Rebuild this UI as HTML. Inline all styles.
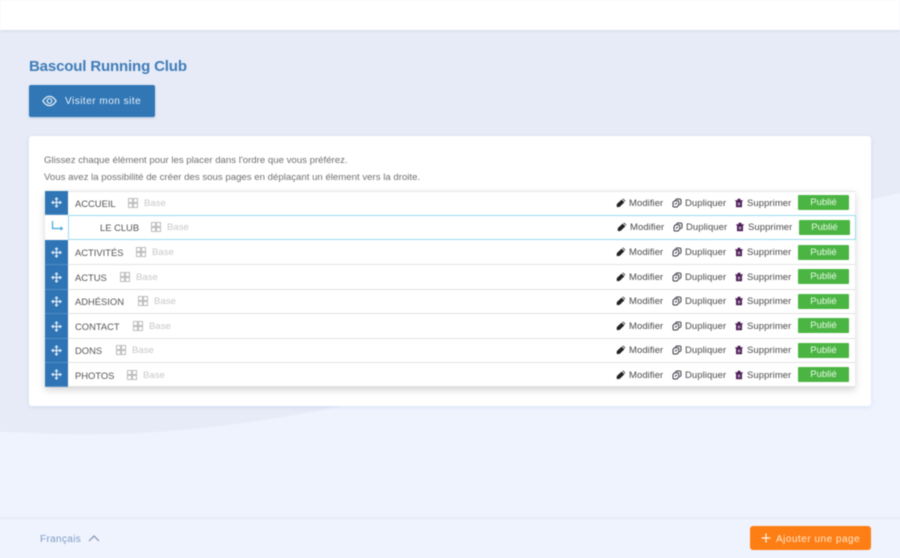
<!DOCTYPE html>
<html lang="fr"><head><meta charset="utf-8"><title>Bascoul Running Club</title>
<style>
html,body{margin:0;padding:0}
body{width:900px;height:558px;overflow:hidden;position:relative;background:#eff3fe;font-family:"Liberation Sans",sans-serif;color:#555}
.a{position:absolute}
#wrap{position:absolute;left:0;top:0;width:900px;height:558px;filter:blur(.45px)}
.top{left:0;top:0;width:900px;height:30px;background:#fff;box-shadow:0 1px 3px rgba(120,140,180,.18)}
.title{left:29px;top:57px;font-size:15px;line-height:20px;font-weight:bold;color:#3f7cb8;white-space:nowrap;letter-spacing:-.15px}
.visit{left:29px;top:85px;width:126px;height:32px;background:#3177b6;border-radius:2px;color:#e6eff8;box-shadow:0 1px 2px rgba(50,90,140,.25)}
.visit span{position:absolute;left:36px;top:10px;font-size:10px;line-height:14px;letter-spacing:.5px;white-space:nowrap}
.card{left:29px;top:136px;width:842px;height:270px;background:#fff;border-radius:3px;box-shadow:0 1px 5px rgba(130,160,215,.2)}
.p{left:44px;font-size:9.65px;line-height:13px;color:#707070;white-space:nowrap}
.list{left:45px;top:191px;width:810px;height:196px;box-shadow:0 3px 7px rgba(60,60,60,.22)}
.row{position:absolute;background:#fff;border-bottom:1px solid #e2e2e2;box-sizing:border-box;left:68px;width:787px}
.row.first{border-top:1px solid #e6e6e6}
.h{position:absolute;left:45px;width:23px;background:#2f75b5;border-bottom:1px solid #4f8cc4;box-sizing:border-box}
.h svg{position:absolute;left:6px;top:50%;margin-top:-5.5px}
.child{left:68px;width:788px;border:1px solid #9adcee;background:#fff;box-sizing:border-box;position:absolute;top:215px;height:25px}
.t{position:absolute;font-size:9.4px;line-height:12px;margin-top:1px;color:#555;white-space:nowrap}
.b{position:absolute;font-size:9.6px;line-height:12px;margin-top:1px;color:#c8c8c8;white-space:nowrap}
.q{position:absolute;width:10px;height:10px}
.act{position:absolute;font-size:9.5px;line-height:12px;margin-top:1px;letter-spacing:.06px;color:#4a4a4a;white-space:nowrap}
.ic{position:absolute;width:10px;height:10px}
.pub{position:absolute;width:51px;height:15px;background:#4bb543;color:#eaf7e8;font-size:9.5px;line-height:16px;text-align:center;border-radius:1px}
.fline{left:0;top:518px;width:900px;height:1px;background:#e4e8f3;box-shadow:0 -1px 2px rgba(140,150,180,.1)}
.lang{left:40px;top:533px;font-size:10px;line-height:13px;color:#7c9cc4;letter-spacing:.35px}
.add{left:750px;top:526px;width:121px;height:24px;background:#fd7e14;border-radius:3px;color:#fde8d4}
.add span{position:absolute;left:26px;top:7px;font-size:10px;line-height:13px;letter-spacing:.5px;white-space:nowrap}
</style></head><body><div id="wrap">
<svg class="a" style="left:0;top:0" width="900" height="558"><path d="M0 30H900V193C760 220 600 340 430 385C300 420 170 437 60 434C35 433 15 432 0 432Z" fill="#e6ebf7"/></svg>
<div class="a top"></div>
<div class="a title">Bascoul Running Club</div>
<div class="a visit">
<svg class="a" style="left:13px;top:9px" width="15" height="14" viewBox="0 0 15 14" fill="none" stroke="#e6eff8" stroke-width="1.2"><path d="M.9 7C3 3.6 5.2 2.4 7.5 2.4S12 3.6 14.1 7C12 10.4 9.800 11.600 7.500 11.600S3 10.400 .9 7Z"/><circle cx="7.500" cy="7" r="2.300"/></svg>
<span>Visiter mon site</span></div>
<div class="a card"></div>
<div class="a p" style="top:154px">Glissez chaque élément pour les placer dans l'ordre que vous préférez.</div>
<div class="a p" style="top:171px">Vous avez la possibilité de créer des sous pages en déplaçant un élement vers la droite.</div>
<div class="a list"></div>

<svg width="0" height="0" style="position:absolute"><defs>
<g id="mv" fill="none" stroke="#e3eef8" stroke-width="1.200"><path d="M5.500 1V10M1 5.500H10"/><path d="M4 2.400L5.500 .8L7 2.400M4 8.600L5.500 10.200L7 8.600M2.400 4L.8 5.500L2.400 7M8.600 4L10.200 5.500L8.600 7" stroke-width="1"/></g>
<g id="qr" fill="none" stroke="#bdbdbd" stroke-width="1"><rect x=".5" y=".5" width="4" height="4"/><rect x="5.500" y=".5" width="4" height="4"/><rect x=".5" y="5.500" width="4" height="4"/><rect x="5.500" y="5.500" width="4" height="4"/></g>
<g id="ed"><path d="M.6 8.200L.9 6L5.600 1.600L8.400 4.300L3.800 8.800L1.400 9.200Z" fill="#222"/><path d="M6.300 1L7.200.5L9.400 2.700L9 3.600Z" fill="#444"/></g>
<g id="du" fill="none" stroke="#3a3a46" stroke-width="1"><path d="M3.300 2.600L4.500 1H7.500C8.500 1 9 1.500 9 2.500V5.500L7.800 7"/><path d="M1 4.500L2.500 2.800H5.500C6.200 2.800 6.800 3.400 6.800 4.100V7L5 9H2.300C1.500 9 1 8.500 1 7.700Z"/><path d="M3 6.500L5 4.700"/></g>
<g id="tr"><path d="M2 3H8V9.200H2Z" fill="#4c1c57"/><path d="M1.200 2.200H8.800V3.200H1.200ZM3.600 .8H6.400V2.200H3.600Z" fill="#4c1c57"/><rect x="3.700" y="4.500" width="2.600" height="3" fill="#a98bb0"/></g>
</defs></svg>

<div class="row first" style="top:191px;height:25px"></div>
<div class="row" style="top:240px;height:25px"></div>
<div class="row" style="top:265px;height:25px"></div>
<div class="row" style="top:290px;height:24px"></div>
<div class="row" style="top:314px;height:25px"></div>
<div class="row" style="top:339px;height:24px"></div>
<div class="row" style="top:363px;height:24px"></div>
<div class="child"></div>

<div class="h" style="top:191px;height:24px"><svg width="11" height="11"><use href="#mv"/></svg></div>
<div class="h" style="top:240px;height:25px"><svg width="11" height="11"><use href="#mv"/></svg></div>
<div class="h" style="top:265px;height:25px"><svg width="11" height="11"><use href="#mv"/></svg></div>
<div class="h" style="top:290px;height:24px"><svg width="11" height="11"><use href="#mv"/></svg></div>
<div class="h" style="top:314px;height:25px"><svg width="11" height="11"><use href="#mv"/></svg></div>
<div class="h" style="top:339px;height:24px"><svg width="11" height="11"><use href="#mv"/></svg></div>
<div class="h" style="top:363px;height:24px"><svg width="11" height="11"><use href="#mv"/></svg></div>
<svg class="a" style="left:51px;top:220px" width="14" height="12" fill="none" stroke="#3fa6d8" stroke-width="1.200"><path d="M1.500 1V8.500H11"/><path d="M9.500 6.800L11.500 8.500L9.500 10.200" stroke-width="1"/></svg>

<div class="t" style="left:75px;top:197px">ACCUEIL</div><svg class="q" style="left:128px;top:198px"><use href="#qr"/></svg><div class="b" style="left:144px;top:197px">Base</div>
<div class="t" style="left:100px;top:221px">LE CLUB</div><svg class="q" style="left:151px;top:222px"><use href="#qr"/></svg><div class="b" style="left:167px;top:221px">Base</div>
<div class="t" style="left:75px;top:246px">ACTIVITÉS</div><svg class="q" style="left:136px;top:247px"><use href="#qr"/></svg><div class="b" style="left:152px;top:246px">Base</div>
<div class="t" style="left:75px;top:271px">ACTUS</div><svg class="q" style="left:120px;top:272px"><use href="#qr"/></svg><div class="b" style="left:136px;top:271px">Base</div>
<div class="t" style="left:75px;top:295px">ADHÉSION</div><svg class="q" style="left:138px;top:296px"><use href="#qr"/></svg><div class="b" style="left:154px;top:295px">Base</div>
<div class="t" style="left:75px;top:320px">CONTACT</div><svg class="q" style="left:133px;top:321px"><use href="#qr"/></svg><div class="b" style="left:149px;top:320px">Base</div>
<div class="t" style="left:75px;top:344px">DONS</div><svg class="q" style="left:116px;top:345px"><use href="#qr"/></svg><div class="b" style="left:132px;top:344px">Base</div>
<div class="t" style="left:75px;top:369px">PHOTOS</div><svg class="q" style="left:127px;top:370px"><use href="#qr"/></svg><div class="b" style="left:143px;top:369px">Base</div>

<svg class="ic" style="left:616px;top:198px"><use href="#ed"/></svg><div class="act" style="left:629px;top:197px">Modifier</div><svg class="ic" style="left:672px;top:198px"><use href="#du"/></svg><div class="act" style="left:685px;top:197px">Dupliquer</div><svg class="ic" style="left:734px;top:198px"><use href="#tr"/></svg><div class="act" style="left:747px;top:197px">Supprimer</div><div class="pub" style="left:798px;top:195px">Publié</div>
<svg class="ic" style="left:617px;top:222px"><use href="#ed"/></svg><div class="act" style="left:630px;top:221px">Modifier</div><svg class="ic" style="left:673px;top:222px"><use href="#du"/></svg><div class="act" style="left:686px;top:221px">Dupliquer</div><svg class="ic" style="left:735px;top:222px"><use href="#tr"/></svg><div class="act" style="left:748px;top:221px">Supprimer</div><div class="pub" style="left:799px;top:220px">Publié</div>
<svg class="ic" style="left:616px;top:247px"><use href="#ed"/></svg><div class="act" style="left:629px;top:246px">Modifier</div><svg class="ic" style="left:672px;top:247px"><use href="#du"/></svg><div class="act" style="left:685px;top:246px">Dupliquer</div><svg class="ic" style="left:734px;top:247px"><use href="#tr"/></svg><div class="act" style="left:747px;top:246px">Supprimer</div><div class="pub" style="left:798px;top:245px">Publié</div>
<svg class="ic" style="left:616px;top:272px"><use href="#ed"/></svg><div class="act" style="left:629px;top:271px">Modifier</div><svg class="ic" style="left:672px;top:272px"><use href="#du"/></svg><div class="act" style="left:685px;top:271px">Dupliquer</div><svg class="ic" style="left:734px;top:272px"><use href="#tr"/></svg><div class="act" style="left:747px;top:271px">Supprimer</div><div class="pub" style="left:798px;top:269px">Publié</div>
<svg class="ic" style="left:616px;top:296px"><use href="#ed"/></svg><div class="act" style="left:629px;top:295px">Modifier</div><svg class="ic" style="left:672px;top:296px"><use href="#du"/></svg><div class="act" style="left:685px;top:295px">Dupliquer</div><svg class="ic" style="left:734px;top:296px"><use href="#tr"/></svg><div class="act" style="left:747px;top:295px">Supprimer</div><div class="pub" style="left:798px;top:294px">Publié</div>
<svg class="ic" style="left:616px;top:321px"><use href="#ed"/></svg><div class="act" style="left:629px;top:320px">Modifier</div><svg class="ic" style="left:672px;top:321px"><use href="#du"/></svg><div class="act" style="left:685px;top:320px">Dupliquer</div><svg class="ic" style="left:734px;top:321px"><use href="#tr"/></svg><div class="act" style="left:747px;top:320px">Supprimer</div><div class="pub" style="left:798px;top:318px">Publié</div>
<svg class="ic" style="left:616px;top:345px"><use href="#ed"/></svg><div class="act" style="left:629px;top:344px">Modifier</div><svg class="ic" style="left:672px;top:345px"><use href="#du"/></svg><div class="act" style="left:685px;top:344px">Dupliquer</div><svg class="ic" style="left:734px;top:345px"><use href="#tr"/></svg><div class="act" style="left:747px;top:344px">Supprimer</div><div class="pub" style="left:798px;top:343px">Publié</div>
<svg class="ic" style="left:616px;top:370px"><use href="#ed"/></svg><div class="act" style="left:629px;top:369px">Modifier</div><svg class="ic" style="left:672px;top:370px"><use href="#du"/></svg><div class="act" style="left:685px;top:369px">Dupliquer</div><svg class="ic" style="left:734px;top:370px"><use href="#tr"/></svg><div class="act" style="left:747px;top:369px">Supprimer</div><div class="pub" style="left:798px;top:367px">Publié</div>

<div class="a fline"></div>
<div class="a lang">Français</div>
<svg class="a" style="left:88px;top:534px" width="12" height="9" fill="none" stroke="#7f93ad" stroke-width="1.200"><path d="M1 7L6 2L11 7"/></svg>
<div class="a add"><svg class="a" style="left:11px;top:7px" width="10" height="10" fill="none" stroke="#fff3e6" stroke-width="1.300"><path d="M5 .5V9.500M.5 5H9.500"/></svg><span>Ajouter une page</span></div>
</div></body></html>
